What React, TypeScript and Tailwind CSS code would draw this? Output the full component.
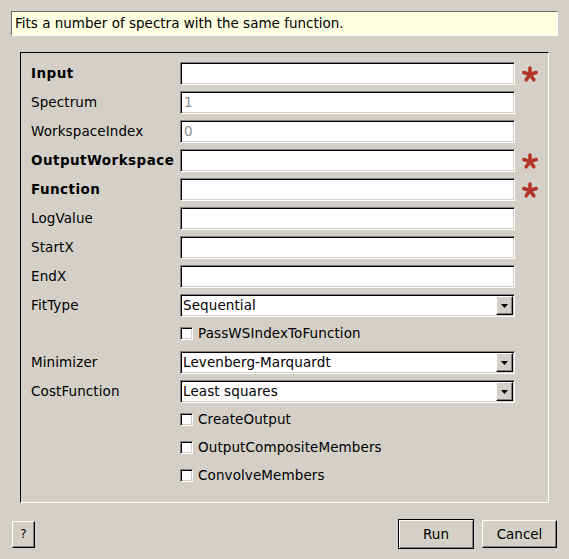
import React from 'react';

const font = { fontFamily: '"DejaVu Sans", "Liberation Sans", sans-serif' };

const sunken =
  'border border-t-[#808080] border-l-[#808080] border-r-white border-b-white shadow-[inset_1px_1px_0_#000,inset_-1px_-1px_0_#d4d0c8]';

const Star: React.FC = () => (
  <svg width="18" height="18" viewBox="0 0 18 18" className="ml-[6px]">
    {[-90, -18, 54, 126, 198].map((a) => {
      const r = (a * Math.PI) / 180;
      return (
        <line
          key={a}
          x1="9"
          y1="9.5"
          x2={9 + Math.cos(r) * 6.5}
          y2={9.5 + Math.sin(r) * 6.5}
          stroke="#b3352a"
          strokeWidth="3.6"
          strokeLinecap="round"
        />
      );
    })}
  </svg>
);

const TextRow: React.FC<{ label: string; bold?: boolean; value?: string; required?: boolean }> = ({
  label,
  bold,
  value,
  required,
}) => (
  <div className="flex items-center h-[23px]">
    <div className={`w-[149px] text-black whitespace-nowrap ${bold ? 'font-bold tracking-[0.45px]' : 'tracking-[0.1px]'}`}>
      {label}
    </div>
    <div className={`w-[335px] h-[23px] bg-white flex items-center pl-[3px] text-[#8a8a8a] ${sunken}`}>
      {value}
    </div>
    {required && <Star />}
  </div>
);

const ComboRow: React.FC<{ label: string; value: string }> = ({ label, value }) => (
  <div className="flex items-center h-[23px]">
    <div className="w-[149px] text-black tracking-[0.1px]">{label}</div>
    <div className={`w-[335px] h-[23px] bg-white flex items-center text-black tracking-[0.1px] ${sunken}`}>
      <span className="flex-1 pl-[2px]">{value}</span>
      <div className="w-[17px] h-[19px] mr-[1px] bg-[#d4d0c8] flex items-center justify-center border border-t-white border-l-white border-r-black border-b-black shadow-[inset_-1px_-1px_0_#808080]">
        <svg width="7" height="4" viewBox="0 0 7 4">
          <polygon points="0,0 7,0 3.5,4" fill="#000" />
        </svg>
      </div>
    </div>
  </div>
);

const CheckRow: React.FC<{ label: string }> = ({ label }) => (
  <div className="flex items-center h-[21px] pl-[149px]">
    <div className={`w-[13px] h-[13px] bg-white ${sunken}`} />
    <span className="ml-[5px] text-black tracking-[0.1px]">{label}</span>
  </div>
);

export default function App() {
  return (
    <div className="w-[569px] h-[559px] bg-[#d4d0c8] flex flex-col pt-[11px] pl-[11px] text-[13.5px]" style={font}>
      <div className="w-[547px] h-[25px] bg-[#ffffe1] border border-t-[#6b6b6b] border-l-[#6b6b6b] border-r-white border-b-white flex items-center pl-[3px] text-black">
        Fits a number of spectra with the same function.
      </div>

      <div className="ml-[9px] mt-[16px] w-[529px] h-[451px] border border-t-black border-l-black border-r-white border-b-white pt-[9px] pl-[10px] flex flex-col">
        <TextRow label="Input" bold required />
        <div className="mt-[6px]"><TextRow label="Spectrum" value="1" /></div>
        <div className="mt-[6px]"><TextRow label="WorkspaceIndex" value="0" /></div>
        <div className="mt-[6px]"><TextRow label="OutputWorkspace" bold required /></div>
        <div className="mt-[6px]"><TextRow label="Function" bold required /></div>
        <div className="mt-[6px]"><TextRow label="LogValue" /></div>
        <div className="mt-[6px]"><TextRow label="StartX" /></div>
        <div className="mt-[6px]"><TextRow label="EndX" /></div>
        <div className="mt-[6px]"><ComboRow label="FitType" value="Sequential" /></div>
        <div className="mt-[6px]"><CheckRow label="PassWSIndexToFunction" /></div>
        <div className="mt-[7px]"><ComboRow label="Minimizer" value="Levenberg-Marquardt" /></div>
        <div className="mt-[6px]"><ComboRow label="CostFunction" value="Least squares" /></div>
        <div className="mt-[6px]"><CheckRow label="CreateOutput" /></div>
        <div className="mt-[7px]"><CheckRow label="OutputCompositeMembers" /></div>
        <div className="mt-[7px]"><CheckRow label="ConvolveMembers" /></div>
      </div>

      <div className="flex items-center mt-[16px] w-[547px]">
        <button className="ml-[1px] w-[23px] h-[27px] bg-[#d4d0c8] text-[12px] text-black border border-t-white border-l-white border-r-black border-b-black shadow-[inset_-1px_-1px_0_#808080]">
          ?
        </button>
        <div className="flex-1" />
        <button className="w-[76px] h-[30px] bg-[#d4d0c8] text-black border border-black shadow-[inset_1px_1px_0_#fff,inset_-1px_-1px_0_#808080]">
          Run
        </button>
        <button className="ml-[8px] mr-[1px] w-[75px] h-[28px] bg-[#d4d0c8] text-black border border-t-white border-l-white border-r-black border-b-black shadow-[inset_-1px_-1px_0_#808080]">
          Cancel
        </button>
      </div>
    </div>
  );
}
